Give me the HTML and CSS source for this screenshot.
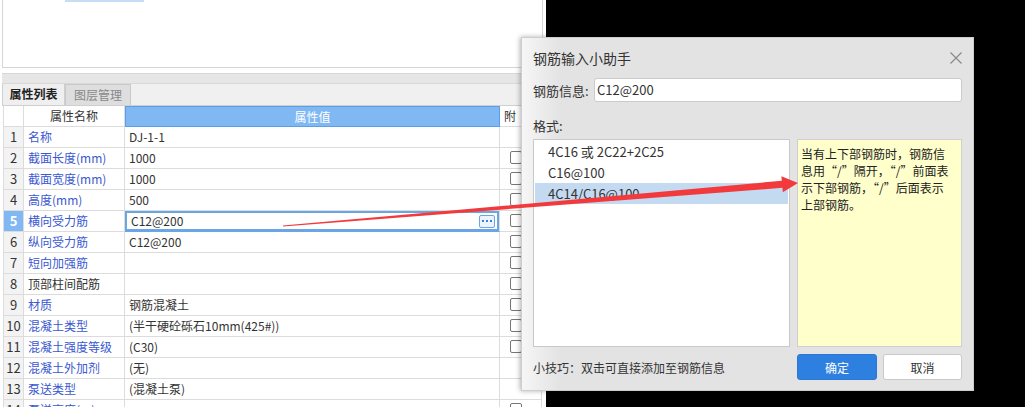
FILE: index.html
```html
<!DOCTYPE html>
<html lang="zh">
<head>
<meta charset="utf-8">
<title>钢筋输入小助手</title>
<link rel="stylesheet" href="styles.css">
</head>
<body>
<div class="app">
  <div class="left">
    <div class="topbox"><div class="topsel"></div></div>
    <div class="band"></div>
    <div class="tabs">
      <div class="tab active">属性列表</div>
      <div class="tab">图层管理</div>
    </div>
    <div class="grid">
      <div class="row head">
        <div class="c num"></div>
        <div class="c name hname">属性名称</div>
        <div class="c val hval">属性值</div>
        <div class="c att">附</div>
      </div>
      <div class="row"><div class="c num">1</div><div class="c name">名称</div><div class="c val">DJ-1-1</div><div class="c att"></div></div>
      <div class="row"><div class="c num">2</div><div class="c name">截面长度(mm)</div><div class="c val">1000</div><div class="c att"><span class="cb"></span></div></div>
      <div class="row"><div class="c num">3</div><div class="c name">截面宽度(mm)</div><div class="c val">1000</div><div class="c att"><span class="cb"></span></div></div>
      <div class="row"><div class="c num">4</div><div class="c name">高度(mm)</div><div class="c val">500</div><div class="c att"><span class="cb"></span></div></div>
      <div class="row sel"><div class="c num">5</div><div class="c name">横向受力筋</div><div class="c val edit"><span>C12@200</span><span class="more"><i></i><i></i><i></i></span></div><div class="c att"><span class="cb"></span></div></div>
      <div class="row"><div class="c num">6</div><div class="c name">纵向受力筋</div><div class="c val">C12@200</div><div class="c att"><span class="cb"></span></div></div>
      <div class="row"><div class="c num">7</div><div class="c name">短向加强筋</div><div class="c val"></div><div class="c att"><span class="cb"></span></div></div>
      <div class="row"><div class="c num">8</div><div class="c name dark-text">顶部柱间配筋</div><div class="c val"></div><div class="c att"><span class="cb"></span></div></div>
      <div class="row"><div class="c num">9</div><div class="c name">材质</div><div class="c val">钢筋混凝土</div><div class="c att"><span class="cb"></span></div></div>
      <div class="row"><div class="c num">10</div><div class="c name">混凝土类型</div><div class="c val">(半干硬砼砾石10mm(425#))</div><div class="c att"><span class="cb"></span></div></div>
      <div class="row"><div class="c num">11</div><div class="c name">混凝土强度等级</div><div class="c val">(C30)</div><div class="c att"><span class="cb"></span></div></div>
      <div class="row"><div class="c num">12</div><div class="c name">混凝土外加剂</div><div class="c val">(无)</div><div class="c att"></div></div>
      <div class="row"><div class="c num">13</div><div class="c name">泵送类型</div><div class="c val">(混凝土泵)</div><div class="c att"></div></div>
      <div class="row"><div class="c num">14</div><div class="c name">泵送高度(m)</div><div class="c val"></div><div class="c att"><span class="cb"></span></div></div>
    </div>
  </div>
  <div class="dark"></div>
</div>

<div class="dialog">
  <div class="dlg-head">
    <span class="dlg-title">钢筋输入小助手</span>
    <svg class="dlg-close" width="12" height="12" viewBox="0 0 12 12"><path d="M0.5 0.5 L11.5 11.5 M11.5 0.5 L0.5 11.5" stroke="#8a8a8a" stroke-width="1.2" fill="none"/></svg>
  </div>
  <div class="dlg-info">
    <span class="lbl">钢筋信息:</span>
    <div class="input">C12@200</div>
  </div>
  <div class="dlg-fmt">格式:</div>
  <div class="dlg-panels">
    <div class="list">
      <div class="item">4C16 或 2C22+2C25</div>
      <div class="item">C16@100</div>
      <div class="item on">4C14/C16@100</div>
    </div>
    <div class="hint">
      <div>当有上下部钢筋时，钢筋信</div>
      <div>息用“/”隔开，“/”前面表</div>
      <div>示下部钢筋，“/”后面表示</div>
      <div>上部钢筋。</div>
    </div>
  </div>
  <div class="dlg-foot">
    <span class="tip">小技巧：双击可直接添加至钢筋信息</span>
    <button class="btn ok">确定</button>
    <button class="btn cancel">取消</button>
  </div>
</div>

<svg class="arrow" width="1025" height="407" viewBox="0 0 1025 407">
  <polygon fill="#f23a3c" points="283,225.6 781.8,180.8 781.4,176.3 798,183 782.8,192.3 782.4,187.8 283,226.6"/>
</svg>
</body>
</html>
```

FILE: styles.css
```css
* { box-sizing: border-box; margin: 0; padding: 0; }
html, body { width: 1025px; height: 407px; overflow: hidden; }
body {
  background: #000;
  font-family: "Noto Sans CJK SC", "Noto Sans", sans-serif;
  color: #333;
  position: relative;
}
.app { display: flex; height: 407px; }
.left { width: 546px; flex: none; background: #fff; overflow: hidden; }
.dark { flex: 1; background: #000; }

.topbox {
  margin-left: 2px; width: 541px; height: 68px;
  border: 1px solid #d5d5d5; border-top: none; background: #fff;
}
.topsel { margin-left: 62px; width: 79px; height: 2px; background: #c7ddf5; }
.band {
  margin: 5px 0 0 2px; width: 541px; height: 11px;
  background: #e6e6e6; border-top: 1px solid #d8d8d8; border-bottom: 1px solid #d8d8d8;
}
.tabs {
  display: flex; margin-left: 2px; width: 541px; height: 22px;
  background: #f0f0f0; border-bottom: 1px solid #cfcfcf;
}
.tab {
  font-size: 12px; line-height: 20px; text-align: center; color: #888;
  width: 66px; background: #dedede; border: 1px solid #c9c9c9; border-bottom: none;
}
.tab.active {
  width: 63px; color: #222; font-weight: bold; background: #efefef; border-color: #d0d0d0;
  border-top: none;
}

.grid { margin-left: 3px; width: 539px; }
.row {
  display: grid; grid-template-columns: 21px 101px 375px 42px; height: 21px;
}
.c {
  border-right: 1px solid #dcdcdc; border-bottom: 1px solid #dcdcdc;
  font-size: 12px; line-height: 20px; white-space: nowrap; overflow: hidden;
}
.num { background: #f3f3f3; text-align: center; font-size: 13px; color: #333; border-left: 1px solid #dcdcdc; }
.name { padding-left: 4px; color: #3a58cf; }
.name.dark-text { color: #333; }
.val { padding-left: 4px; color: #333; }
.att { position: relative; }
.head .c { background: #fff; }
.head .num { background: #fff; }
.hname { text-align: center; padding: 0; color: #333; }
.head .hval { background: #80b8f4; border: 1px solid #5c9fe9; color: #fff; text-align: center; line-height: 19px; padding: 0; }
.head .att { padding-left: 4px; }
.cb {
  display: block; margin: 3px 0 0 10px; width: 12px; height: 13px;
  border: 1px solid #777; border-radius: 2px; background: #fff;
}
.row.sel .num { background: #80b8f4; color: #fff; font-weight: bold; }
.val.edit {
  display: flex; align-items: center; justify-content: space-between;
  padding: 0 4px 0 6px; box-shadow: inset 0 0 0 2px #6aa5e6; border-bottom-color: #6aa5e6;
}
.more {
  display: flex; gap: 2px; align-items: center; justify-content: center;
  width: 16px; height: 13px; border: 1px solid #6aa5e6; border-radius: 2px; background: #eef4fc;
}
.more i { display: block; width: 2px; height: 2px; background: #3a80df; }

.dialog {
  position: absolute; left: 521px; top: 37px; width: 453px; height: 354px;
  background: linear-gradient(90deg, #f6f6f6 0, #e3e3e3 38px);
  border: 1px solid #cdcdcd;
  box-shadow: -1px 0 5px rgba(0, 0, 0, 0.3);
  padding: 0 11px 0 11px;
  display: flex; flex-direction: column;
}
.dlg-head { height: 39px; display: flex; align-items: center; justify-content: space-between; }
.dlg-title { font-size: 14px; color: #333; }
.dlg-close { margin-right: 0; }
.dlg-info { display: flex; align-items: center; height: 24px; margin-top: 1px; }
.lbl { width: 61px; font-size: 13px; color: #333; }
.input {
  flex: 1; height: 24px; background: #fff; border: 1px solid #cbcbcb; border-radius: 3px;
  font-size: 13px; line-height: 22px; padding-left: 2px; color: #333;
}
.dlg-fmt { height: 37px; padding-top: 14px; font-size: 13px; line-height: 20px; color: #333; }
.dlg-panels { display: flex; gap: 7px; height: 208px; }
.list { width: 257px; background: #fff; border: 1px solid #c9c9c9; padding: 1px; }
.item { height: 21px; line-height: 21px; font-size: 13px; padding-left: 13px; color: #333; }
.item.on { background: #c4daf1; }
.hint {
  flex: 1; background: #ffffcc; border: 1px solid #cfcfcf; padding: 5px 0 0 3px;
  font-size: 12px; line-height: 17px; color: #222; white-space: nowrap;
}
.dlg-foot { display: flex; align-items: center; margin-top: 7px; height: 26px; gap: 6px; }
.tip { flex: 1; font-size: 12px; color: #333; }
.btn {
  font-family: inherit; font-size: 12px; height: 26px; border-radius: 3px; cursor: default;
}
.btn.ok { width: 80px; background: #2e80e0; color: #fff; border: 1px solid #2a78d6; }
.btn.cancel { width: 79px; background: #fff; color: #333; border: 1px solid #c9c9c9; }

.arrow { position: absolute; left: 0; top: 0; pointer-events: none; }
```
